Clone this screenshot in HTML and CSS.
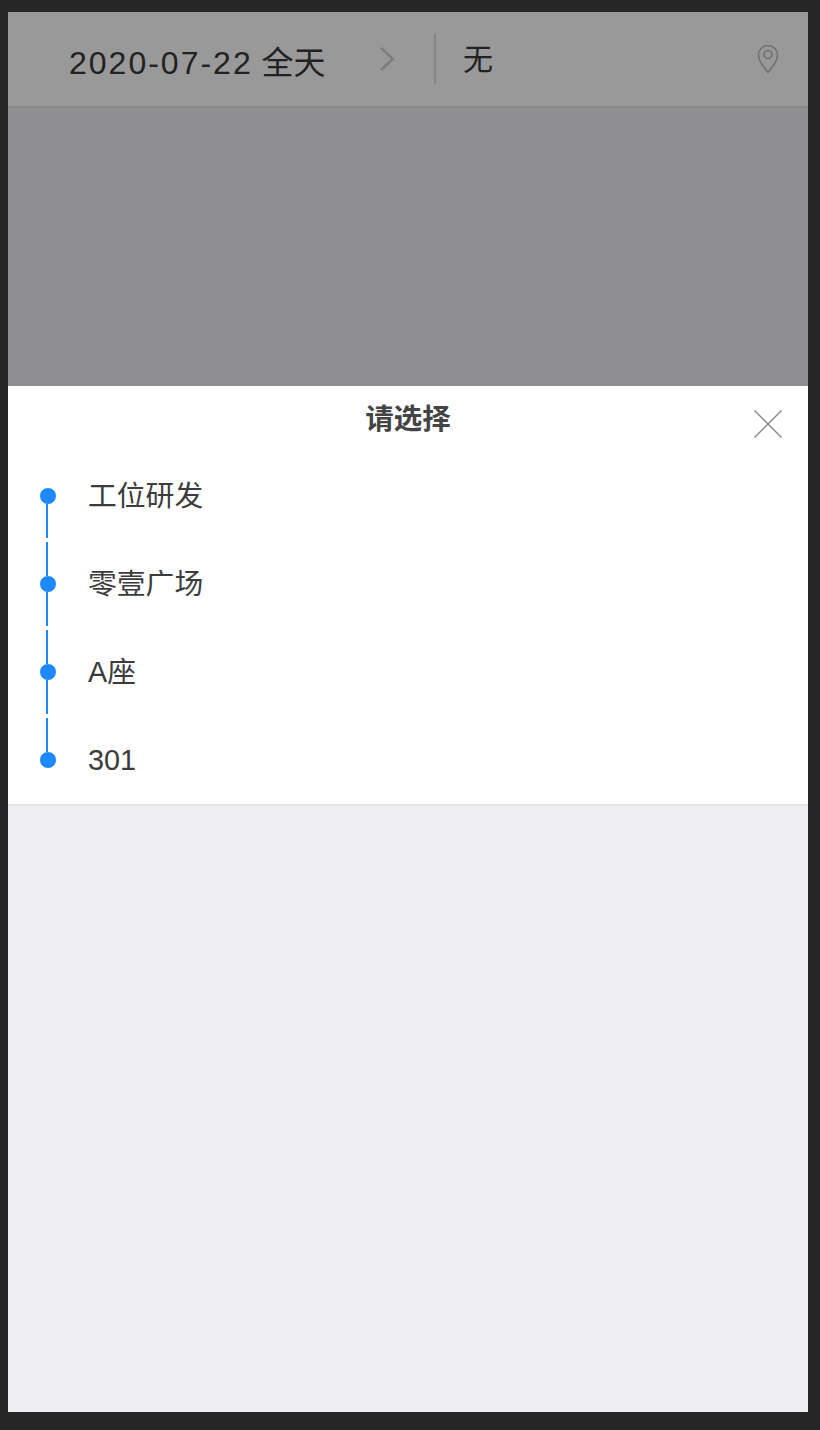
FILE: index.html
```html
<!DOCTYPE html>
<html lang="zh-CN">
<head>
  <meta charset="UTF-8" />
  <meta name="viewport" content="width=device-width, initial-scale=1.0" />
  <title>请选择</title>
  <link rel="stylesheet" href="styles.css">
</head>
<body>
  <div class="screen">
    <header class="top-bar">
      <div class="date-cell">
        <span class="date-text">2020-07-22 <span class="date-range">全天</span></span>
        <svg class="chevron" width="16" height="26" viewBox="0 0 16 26">
          <path d="M2 2l12 11L2 24" fill="none" stroke="#d0d0d0" stroke-width="2.4" />
        </svg>
      </div>
      <div class="place-cell">
        <span class="place-text">无</span>
        <svg class="pin" width="22" height="30" viewBox="0 0 22 30">
          <path d="M11 28.5C5.5 21.5 1.5 16.5 1.5 11a9.5 9.5 0 0 1 19 0c0 5.500-4 10.500-9.500 17.500z" fill="none" stroke="#bdbdbd" stroke-width="1.600" />
          <circle cx="11" cy="10.500" r="4" fill="none" stroke="#bdbdbd" stroke-width="1.600" />
        </svg>
      </div>
    </header>

    <!-- dark layer behind the picker, only down to the sheet -->
    <div class="mask"></div>
    <div class="mask-gap"></div>

    <section class="sheet">
      <div class="sheet-head">
        <h2 class="sheet-title">请选择</h2>
        <button class="close-btn">
          <svg width="30" height="30" viewBox="0 0 30 30">
            <path d="M1.500 1.500l27 27M28.500 1.500l-27 27" fill="none" stroke="#8c8c8c" stroke-width="1.500" />
          </svg>
        </button>
      </div>
      <ul class="steps">
        <li class="step step-first">
          <div class="marker"><i class="line"></i><i class="dot"></i><i class="line"></i></div>
          <span class="step-name">工位研发</span>
        </li>
        <li class="step">
          <div class="marker"><i class="line"></i><i class="dot"></i><i class="line"></i></div>
          <span class="step-name">零壹广场</span>
        </li>
        <li class="step">
          <div class="marker"><i class="line"></i><i class="dot"></i><i class="line"></i></div>
          <span class="step-name">A座</span>
        </li>
        <li class="step step-last">
          <div class="marker"><i class="line"></i><i class="dot"></i><i class="line"></i></div>
          <span class="step-name">301</span>
        </li>
      </ul>
    </section>
  </div>
</body>
</html>
```

FILE: styles.css
```css
html, body {
  margin: 0;
  padding: 0;
  height: 100%;
}
body {
  background-color: #262626;
  font-family: "Liberation Sans", "Noto Sans CJK SC", sans-serif;
  overflow: hidden;
}

.screen {
  position: relative;
  width: 800px;
  height: 1400px;
  margin: 12px 8px 18px;
  background-color: #eeeef3;
}

/* Top bar */
.top-bar {
  height: 94px;
  display: flex;
  align-items: center;
  background-color: #fff;
  border-bottom: 2px solid #e5e5e5;
}
.date-cell {
  width: 428px;
  height: 50px;
  box-sizing: border-box;
  padding: 0 39px 0 61px;
  display: flex;
  align-items: center;
  justify-content: space-between;
  border-right: 2px solid #e0e0e0;
}
.date-text {
  font-size: 32px;
  line-height: 40px;
  letter-spacing: 2px;
  word-spacing: -2px;
  color: #3a3a3a;
  padding-top: 8px;
}
.date-range {
  letter-spacing: 0;
}
.place-cell {
  flex: 1;
  display: flex;
  align-items: center;
  justify-content: space-between;
  padding: 0 29px 0 27px;
}
.place-text {
  font-size: 30px;
  line-height: 40px;
  color: #3a3a3a;
  padding-top: 2px;
}

.mask {
  position: absolute;
  top: 0;
  left: 0;
  right: 0;
  height: 374px;
  background-color: rgba(0, 0, 0, 0.4);
}
.mask-gap {
  height: 278px;
}

/* Picker sheet */
.sheet {
  height: 418px;
  background-color: #fff;
  border-bottom: 2px solid #e5e5e5;
}
.sheet-head {
  height: 66px;
  display: flex;
  align-items: flex-start;
  justify-content: center;
  position: relative;
}
.sheet-title {
  margin: 0;
  font-size: 28.500px;
  font-weight: 700;
  line-height: 66px;
  color: #444;
}
.close-btn {
  position: absolute;
  top: 23px;
  right: 25px;
  padding: 0;
  border: none;
  background: none;
  line-height: 0;
}

.steps {
  list-style: none;
  margin: 0;
  padding: 0;
}
.step {
  height: 88px;
  display: flex;
  align-items: center;
  padding-left: 32px;
}
.marker {
  width: 16px;
  height: 84px;
  display: flex;
  flex-direction: column;
  align-items: center;
  margin-right: 32px;
}
.dot {
  flex: none;
  width: 16px;
  height: 16px;
  border-radius: 50%;
  background-color: #1e88ff;
}
.line {
  flex: 1;
  width: 2px;
  margin-left: -2px;
  background-color: #1e88ff;
}
.step-first .line:first-child,
.step-last .line:last-child {
  visibility: hidden;
}
.step-name {
  font-size: 28.800px;
  line-height: 40px;
  color: #3c3c3c;
}
```
